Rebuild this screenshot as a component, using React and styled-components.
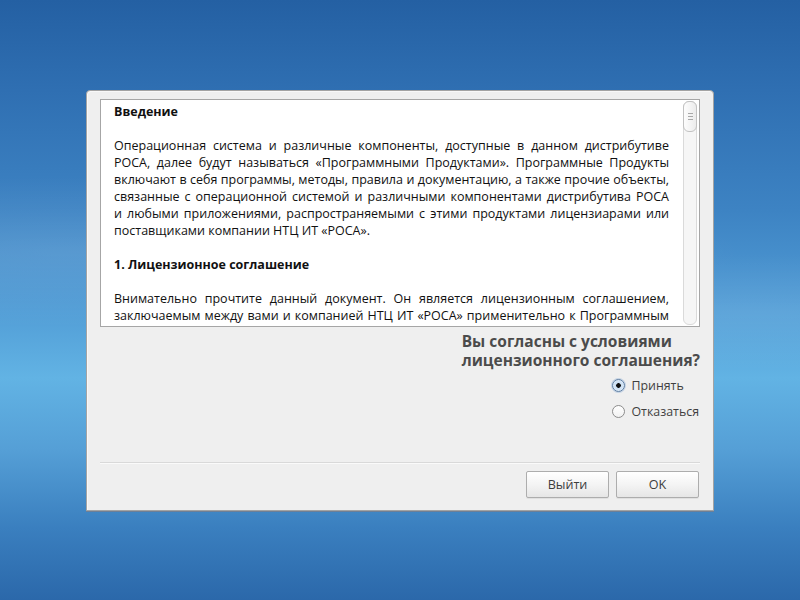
import React from "react";
import styled, { createGlobalStyle } from "styled-components";

const Global = createGlobalStyle`
  html, body { margin: 0; padding: 0; height: 100%; }
  body { font-family: "Open Sans", "Noto Sans", sans-serif; }
  #root { height: 100%; }
`;

const Desktop = styled.div`
  height: 100vh;
  display: flex;
  align-items: center;
  justify-content: center;
  background:
    radial-gradient(ellipse 120% 18% at 10% 42%, rgba(255,255,255,0.10), rgba(255,255,255,0) 70%),
    radial-gradient(ellipse 90% 14% at 95% 52%, rgba(255,255,255,0.08), rgba(255,255,255,0) 70%),
    linear-gradient(180deg, #2460a3 0%, #2f6fb2 15%, #3d83c3 35%, #4f9ad4 50%, #62b3e4 63%, #559fd6 75%, #3a7fbf 88%, #2b68aa 100%);
`;

const Dialog = styled.div`
  width: 628px;
  height: 421px;
  box-sizing: border-box;
  display: flex;
  flex-direction: column;
  background: #efefef;
  border: 1px solid #a3a3a3;
  border-radius: 4px 4px 0 0;
  box-shadow: 0 1px 0 #6d7f96, inset 1px 1px 0 #f8f8f8;
  padding: 8px 13px 12px 13px;
`;

const TextBox = styled.div`
  height: 228px;
  box-sizing: border-box;
  display: flex;
  background: #fff;
  border: 1px solid #a6a6a6;
  flex-shrink: 0;
`;

const Content = styled.div`
  flex: 1;
  overflow: hidden;
  padding: 3px 14px 0 13px;
  font-size: 12.5px;
  line-height: 17px;
  color: #111;
`;

const Para = styled.div`
  margin: 0 0 17px 0;
  font-weight: ${(p) => (p.$bold ? 700 : 400)};
`;

const Line = styled.span`
  display: block;
  white-space: nowrap;
  text-align: justify;
  text-align-last: ${(p) => (p.$last ? "left" : "justify")};
`;

const Track = styled.div`
  width: 12px;
  margin: 1px 2px 1px 0;
  border: 1px solid #dadada;
  border-radius: 6px;
  background: #f6f6f6;
  display: flex;
  flex-direction: column;
`;

const Thumb = styled.div`
  height: 29px;
  margin: -1px;
  border: 1px solid #c2c2c2;
  border-radius: 6px;
  background: linear-gradient(90deg, #fdfdfd, #ececec);
  display: flex;
  flex-direction: column;
  align-items: center;
  justify-content: center;
  gap: 2px;
`;

const Grip = styled.span`
  display: block;
  width: 5px;
  height: 1px;
  background: #a8a8a8;
`;

const Question = styled.div`
  align-self: flex-end;
  margin-top: 5px;
  text-align: left;
  font-size: 15.5px;
  line-height: 19px;
  font-weight: 700;
  color: #4b4b4b;
`;

const RadioGroup = styled.div`
  align-self: flex-end;
  margin: 6px 1px 0 0;
  display: flex;
  flex-direction: column;
  gap: 6px;
`;

const RadioRow = styled.label`
  display: flex;
  align-items: center;
  gap: 6px;
  height: 20px;
  font-size: 12.4px;
  color: #3f3f3f;
`;

const Circle = styled.span`
  width: 11px;
  height: 11px;
  border-radius: 50%;
  border: 1px solid ${(p) => (p.$on ? "#5c7da3" : "#8c8c8c")};
  background: ${(p) =>
    p.$on
      ? "radial-gradient(circle, #111 0 2px, #c9ddf1 2.6px, #eaf3fb 100%)"
      : "linear-gradient(180deg, #ffffff, #f1f1f1)"};
  box-shadow: ${(p) => (p.$on ? "0 0 0 1px rgba(120,160,210,0.35)" : "none")};
  flex-shrink: 0;
`;

const Spacer = styled.div`
  flex: 1;
`;

const Separator = styled.div`
  height: 1px;
  background: #d9d9d9;
  box-shadow: 0 1px 0 #fafafa;
  margin: 0 0 8px 0;
`;

const Footer = styled.div`
  display: flex;
  justify-content: flex-end;
  gap: 7px;
  padding-right: 1px;
`;

const Button = styled.button`
  width: 83px;
  height: 27px;
  border: 1px solid #adadad;
  border-radius: 2px;
  background: linear-gradient(180deg, #ffffff 0%, #f4f4f4 50%, #e6e6e6 100%);
  box-shadow: 0 1px 0 rgba(0,0,0,0.06);
  font-family: "Open Sans", "Noto Sans", sans-serif;
  font-size: 12.6px;
  color: #3d3d3d;
  padding: 0;
`;

const intro = [
  "Операционная система и различные компоненты, доступные в данном дистрибутиве",
  "РОСА, далее будут называться «Программными Продуктами». Программные Продукты",
  "включают в себя программы, методы, правила и документацию, а также прочие объекты,",
  "связанные с операционной системой и различными компонентами дистрибутива РОСА",
  "и любыми приложениями, распространяемыми с этими продуктами лицензиарами или",
  "поставщиками компании НТЦ ИТ «РОСА».",
];

const agreement = [
  "Внимательно прочтите данный документ. Он является лицензионным соглашением,",
  "заключаемым между вами и компанией НТЦ ИТ «РОСА» применительно к Программным",
  "Продуктам. Устанавливая, копируя или используя Программные Продукты любым",
  "способом, вы подтверждаете, что согласны со всеми условиями соглашения.",
];

function Paragraph({ lines }) {
  return (
    <Para>
      {lines.map((l, i) => (
        <Line key={i} $last={i === lines.length - 1}>
          {l}
        </Line>
      ))}
    </Para>
  );
}

export default function App() {
  return (
    <>
      <Global />
      <Desktop>
        <Dialog>
          <TextBox>
            <Content>
              <Para $bold>Введение</Para>
              <Paragraph lines={intro} />
              <Para $bold>1. Лицензионное соглашение</Para>
              <Paragraph lines={agreement} />
            </Content>
            <Track>
              <Thumb>
                <Grip />
                <Grip />
                <Grip />
              </Thumb>
            </Track>
          </TextBox>
          <Question>
            Вы согласны с условиями
            <br />
            лицензионного соглашения?
          </Question>
          <RadioGroup>
            <RadioRow>
              <Circle $on />
              Принять
            </RadioRow>
            <RadioRow>
              <Circle />
              Отказаться
            </RadioRow>
          </RadioGroup>
          <Spacer />
          <Separator />
          <Footer>
            <Button>Выйти</Button>
            <Button>OK</Button>
          </Footer>
        </Dialog>
      </Desktop>
    </>
  );
}
